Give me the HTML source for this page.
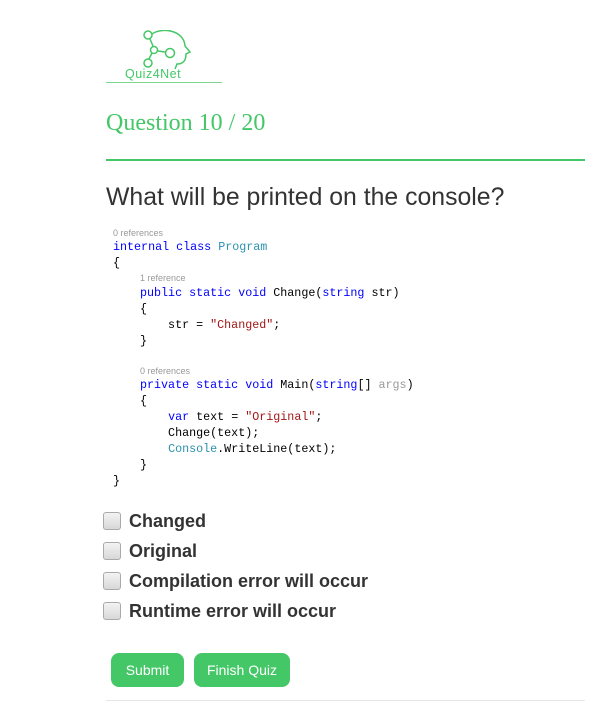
<!DOCTYPE html>
<html><head><style>
body{margin:0;width:594px;height:707px;background:#fff;position:relative;overflow:hidden;font-family:"Liberation Sans",sans-serif}
.a{position:absolute;white-space:pre}
.c{font-family:"Liberation Mono",monospace;font-size:11.7px;color:#000;line-height:16px}
.r{font-size:9px;color:#999;font-family:"Liberation Sans",sans-serif}
.k{color:#0000ff}.t{color:#2b91af}.s{color:#a31515}.g{color:#999}
.cb{position:absolute;left:103px;width:16px;height:16px;border:1px solid #aaa;border-radius:3px;background:linear-gradient(#f3f3f3,#d8d8d8)}
.l{position:absolute;left:129px;font-weight:bold;font-size:18px;color:#333}
.btn{position:absolute;top:653px;height:34px;background:#44c767;border-radius:8px;color:#fff;font-size:14px;line-height:34px;text-align:center}
</style></head><body>
<svg class="a" style="left:140px;top:30px" width="52" height="40" viewBox="0 0 52 40" fill="none" stroke="#44c767" stroke-width="1.5">
<circle cx="8" cy="5" r="4"/><circle cx="14" cy="20" r="3.5"/><circle cx="8" cy="33" r="4"/><circle cx="30" cy="23" r="4.5"/>
<path d="M10 9 L13 16 M18 21 L25 22 M12 23 L9 29 M12 4 C22 -3 44 0 45 16 L50 22 L46 24 C46 31 43 34 37 34 L35 39"/>
</svg>
<div class="a" style="left:125px;top:67px;font-size:12.5px;color:#44c767;letter-spacing:0.5px">Quiz4Net</div>
<div class="a" style="left:106px;top:82px;width:116px;height:1px;background:#7fd694"></div>
<div class="a" style="left:106px;top:110px;font-family:'Liberation Serif',serif;font-size:24px;color:#44c767">Question 10 / 20</div>
<div class="a" style="left:106px;top:159px;width:479px;height:2px;background:#44c767"></div>
<div class="a" style="left:106px;top:184px;font-size:24.8px;color:#333">What will be printed on the console?</div>
<div class="a r" style="left:113px;top:228px">0 references</div>
<div class="a c" style="left:113px;top:239px"><span class="k">internal class</span> <span class="t">Program</span>
{</div>
<div class="a r" style="left:140px;top:273px">1 reference</div>
<div class="a c" style="left:140px;top:285px"><span class="k">public static void</span> Change(<span class="k">string</span> str)
{
    str = <span class="s">"Changed"</span>;
}</div>
<div class="a r" style="left:140px;top:366px">0 references</div>
<div class="a c" style="left:140px;top:377px"><span class="k">private static void</span> Main(<span class="k">string</span>[] <span class="g">args</span>)
{
    <span class="k">var</span> text = <span class="s">"Original"</span>;
    Change(text);
    <span class="t">Console</span>.WriteLine(text);
}</div>
<div class="a c" style="left:113px;top:473px">}</div>
<div class="cb" style="top:512px"></div><div class="l" style="top:511px">Changed</div>
<div class="cb" style="top:542px"></div><div class="l" style="top:541px">Original</div>
<div class="cb" style="top:572px"></div><div class="l" style="top:571px">Compilation error will occur</div>
<div class="cb" style="top:602px"></div><div class="l" style="top:601px">Runtime error will occur</div>
<div class="btn" style="left:111px;width:73px">Submit</div>
<div class="btn" style="left:194px;width:96px">Finish Quiz</div>
<div class="a" style="left:106px;top:700px;width:479px;height:1px;background:#e6e6e6"></div>
</body></html>
